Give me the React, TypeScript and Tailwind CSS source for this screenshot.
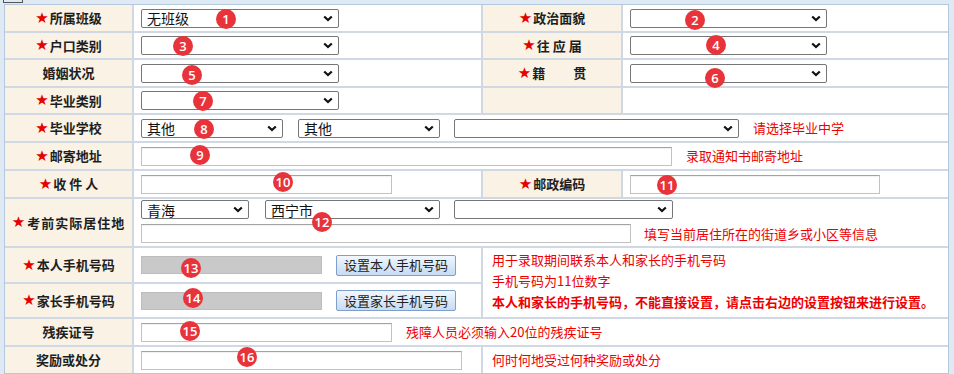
import React from 'react';

const Star = () => (
  <span className="text-[#e60000] text-[15px] leading-none mr-[1px]" style={{ fontFamily: '"DejaVu Sans", sans-serif' }}>★</span>
);

const Label = ({ children, star = true, className = '' }: { children?: React.ReactNode; star?: boolean; className?: string }) => (
  <div className={`flex items-center justify-center bg-[#f9f2e5] font-bold text-[13px] text-[#1e1e1e] ${className}`}>
    {children !== undefined && star && <Star />}
    {children}
  </div>
);

const Sel = ({ w, value = '', className = '' }: { w: string; value?: string; className?: string }) => (
  <div className={`flex items-center justify-between h-[19px] bg-white border border-[#767676] rounded-[2px] pl-[5px] pr-[5px] text-[14px] text-[#111] ${w} ${className}`}>
    <span className="leading-none">{value}</span>
    <svg width="10" height="7" viewBox="0 0 10 7" className="shrink-0">
      <path d="M1.2 1.5l3.8 3.6 3.8-3.6" fill="none" stroke="#111" strokeWidth="2.2" />
    </svg>
  </div>
);

const Inp = ({ w, className = '' }: { w: string; className?: string }) => (
  <div className={`h-[19px] bg-white border border-[#c2c2c2] border-t-[#a3a3a3] shadow-[inset_0_1px_1px_rgba(0,0,0,0.06)] ${w} ${className}`} />
);

const Gray = () => <div className="h-[18px] w-[181px] bg-[#c9c9c9] border border-[#bdbdbd]" />;

const Btn = ({ children }: { children: React.ReactNode }) => (
  <div className="ml-[14px] flex items-center justify-center h-[21px] w-[120px] rounded-[2px] border border-[#7d9fc9] bg-gradient-to-b from-[#f1f7fe] to-[#c6dbf3] text-[13px] text-[#222]">
    {children}
  </div>
);

const Hint = ({ children, className = '' }: { children: React.ReactNode; className?: string }) => (
  <span className={`text-[13px] text-[#ee0000] whitespace-nowrap ${className}`}>{children}</span>
);

const Cell = ({ children, className = '' }: { children?: React.ReactNode; className?: string }) => (
  <div className={`bg-white flex items-center ${className}`}>{children}</div>
);

const badges: [number, number, number][] = [
  [1, 226, 19], [2, 695, 20], [3, 183, 46], [4, 716, 45], [5, 192, 75], [6, 715, 78],
  [7, 203, 101], [8, 204, 129], [9, 200, 155], [10, 283, 182], [11, 667, 185], [12, 322, 222],
  [13, 191, 268], [14, 193, 298], [15, 190, 331], [16, 247, 357],
];

export default function App() {
  return (
    <div
      className="relative w-[954px] h-[374px] overflow-hidden bg-[#dfe9f4] pl-[4px] pt-[4px]"
      style={{ fontFamily: '"Noto Sans CJK SC", "Noto Sans", sans-serif' }}
    >
      <div className="absolute left-[3px] top-0 w-[20px] h-[3px] border-x border-b border-[#555]" />

      <div className="grid w-[945px] grid-cols-[127px_347px_138px_325px] grid-rows-[26px_25px_26px_25px_26px_26px_26px_47px_34px_33px_26px_26px] gap-[2px] bg-[#d0d9e3] border border-[#b3c7dd]">
        {/* row 1 */}
        <Label>所属班级</Label>
        <Cell className="pl-[7px]"><Sel w="w-[198px]" value="无班级" /></Cell>
        <Label>政治面貌</Label>
        <Cell className="pl-[7px]"><Sel w="w-[197px]" /></Cell>

        {/* row 2 */}
        <Label>户口类别</Label>
        <Cell className="pl-[7px]"><Sel w="w-[198px]" /></Cell>
        <Label>往 应 届</Label>
        <Cell className="pl-[7px]"><Sel w="w-[197px]" /></Cell>

        {/* row 3 */}
        <Label star={false}>婚姻状况</Label>
        <Cell className="pl-[7px]"><Sel w="w-[198px]" /></Cell>
        <Label>籍<span className="inline-block w-[28px]" />贯</Label>
        <Cell className="pl-[7px]"><Sel w="w-[197px]" /></Cell>

        {/* row 4 */}
        <Label>毕业类别</Label>
        <Cell className="pl-[7px]"><Sel w="w-[198px]" /></Cell>
        <Label />
        <Cell />

        {/* row 5 */}
        <Label>毕业学校</Label>
        <Cell className="col-span-3 pl-[7px]">
          <Sel w="w-[142px]" value="其他" />
          <Sel w="w-[142px]" value="其他" className="ml-[15px]" />
          <Sel w="w-[285px]" className="ml-[14px]" />
          <Hint className="ml-[14px]">请选择毕业中学</Hint>
        </Cell>

        {/* row 6 */}
        <Label>邮寄地址</Label>
        <Cell className="col-span-3 pl-[7px]">
          <Inp w="w-[531px]" />
          <Hint className="ml-[14px]">录取通知书邮寄地址</Hint>
        </Cell>

        {/* row 7 */}
        <Label>收 件 人</Label>
        <Cell className="pl-[7px]"><Inp w="w-[251px]" /></Cell>
        <Label>邮政编码</Label>
        <Cell className="pl-[7px]"><Inp w="w-[250px]" /></Cell>

        {/* row 8 */}
        <Label className="tracking-[1px]">考前实际居住地</Label>
        <div className="col-span-3 bg-white pl-[7px] pt-[1px] flex flex-col gap-[5px]">
          <div className="flex items-center">
            <Sel w="w-[108px]" value="青海" />
            <Sel w="w-[175px]" value="西宁市" className="ml-[16px]" />
            <Sel w="w-[219px]" className="ml-[14px]" />
          </div>
          <div className="flex items-center">
            <Inp w="w-[490px]" className="h-[18px]" />
            <Hint className="ml-[13px]">填写当前居住所在的街道乡或小区等信息</Hint>
          </div>
        </div>

        {/* rows 9-10 */}
        <Label>本人手机号码</Label>
        <Cell className="pl-[7px]">
          <Gray />
          <Btn>设置本人手机号码</Btn>
        </Cell>
        <div className="col-span-2 row-span-2 bg-white pl-[9px] pt-[1px] leading-[21px] text-[13px] text-[#ee0000]">
          <div>用于录取期间联系本人和家长的手机号码</div>
          <div>手机号码为11位数字</div>
          <div className="font-bold whitespace-nowrap">本人和家长的手机号码，不能直接设置，请点击右边的设置按钮来进行设置。</div>
        </div>
        <Label>家长手机号码</Label>
        <Cell className="pl-[7px]">
          <Gray />
          <Btn>设置家长手机号码</Btn>
        </Cell>

        {/* row 11 */}
        <Label star={false}>残疾证号</Label>
        <Cell className="col-span-3 pl-[7px]">
          <Inp w="w-[251px]" />
          <Hint className="ml-[14px]">残障人员必须输入20位的残疾证号</Hint>
        </Cell>

        {/* row 12 */}
        <Label star={false}>奖励或处分</Label>
        <Cell className="pl-[7px]"><Inp w="w-[321px]" /></Cell>
        <Cell className="col-span-2 pl-[9px]">
          <Hint>何时何地受过何种奖励或处分</Hint>
        </Cell>
      </div>

      {badges.map(([n, x, y]) => (
        <div
          key={n}
          className="absolute w-[20px] h-[20px] rounded-full bg-[#e8333a] flex items-center justify-center text-white text-[13px] font-semibold leading-none"
          style={{ left: x - 10, top: y - 10, fontFamily: '"Open Sans", "Noto Sans", sans-serif' }}
        >
          {n}
        </div>
      ))}
    </div>
  );
}
